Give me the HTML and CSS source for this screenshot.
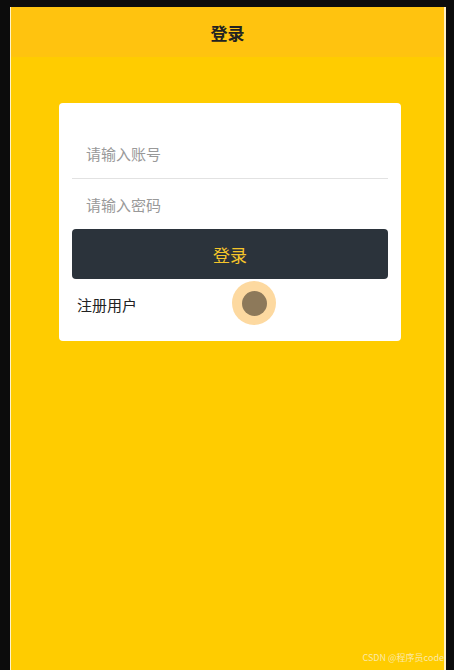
FILE: index.html
```html
<!DOCTYPE html>
<html lang="zh-CN">

<head>
	<meta charset="utf-8">
	<title>登录</title>
	<meta name="viewport" content="width=device-width, initial-scale=1">
	<link rel="stylesheet" href="styles.css">
</head>

<body>
	<div class="screen">
		<header class="nav">
			<h1>登录</h1>
		</header>
		<main class="page">
			<form class="card">
				<input class="field" type="text" placeholder="请输入账号">
				<input class="field" type="password" placeholder="请输入密码">
				<button class="submit" type="button">登录</button>
				<a class="register" href="#">注册用户</a>
				<span class="touch"><i></i></span>
			</form>
		</main>
		<span class="watermark">CSDN @程序员code</span>
	</div>
</body>

</html>
```

FILE: styles.css
```css
*,
*::before,
*::after {
	box-sizing: border-box;
}

:root {
	--yellow: #ffcc00;
	--yellow-dark: #ffc30f;
	--ink: #2b333b;
	--font: "Noto Sans CJK SC", "Noto Sans", sans-serif;
}

body {
	margin: 0;
	padding: 7px 0 0 10px;
	background-color: #0c0c0c;
	font-family: var(--font);
}

.screen {
	position: relative;
	width: 436px;
	height: 663px;
	border-left: 1px solid #fff3c8;
	border-right: 2px solid #fff0c4;
	background-color: var(--yellow);
	overflow: hidden;
}

.nav {
	display: flex;
	align-items: center;
	justify-content: center;
	height: 50px;
	background-color: var(--yellow-dark);

	h1 {
		margin: 0;
		font-size: 17px;
		font-weight: 700;
		color: #222;
	}
}

.page {
	padding: 46px 0 0 48px;
}

.card {
	position: relative;
	display: flex;
	flex-direction: column;
	width: 342px;
	padding: 26px 13px 12px;
	border-radius: 4px;
	background-color: #fff;
}

.field {
	height: 50px;
	padding: 0 14px;
	border: none;
	border-bottom: 1px solid #e2e2e2;
	font: 15px var(--font);
	color: #333;
	outline: none;

	& + .field {
		border-bottom: none;
	}

	&::placeholder {
		color: #999;
	}
}

.submit {
	height: 50px;
	border: none;
	border-radius: 4px;
	background-color: var(--ink);
	font: 17px var(--font);
	color: #f5c52a;
}

.register {
	display: flex;
	align-items: center;
	height: 50px;
	padding-left: 5px;
	font-size: 15px;
	color: #222;
	text-decoration: none;
}

/* tap indicator from the screen recording */
.touch {
	position: absolute;
	left: 173px;
	top: 178px;
	display: grid;
	place-items: center;
	width: 44px;
	height: 44px;
	border-radius: 50%;
	background-color: #fdd9a0;

	i {
		width: 25px;
		height: 25px;
		border-radius: 50%;
		background-color: #8d795a;
	}
}

.watermark {
	position: absolute;
	right: 0;
	bottom: 6px;
	font-size: 9px;
	color: #fbe9a8;
	white-space: nowrap;
}
```
